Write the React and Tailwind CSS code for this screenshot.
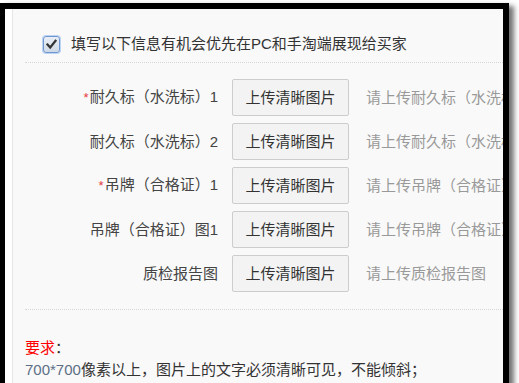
const rows = [
  { label: '耐久标（水洗标）1', hint: '请上传耐久标（水洗标）图片', required: true },
  { label: '耐久标（水洗标）2', hint: '请上传耐久标（水洗标）图片', required: false },
  { label: '吊牌（合格证）1', hint: '请上传吊牌（合格证）图片', required: true },
  { label: '吊牌（合格证）图1', hint: '请上传吊牌（合格证）图片', required: false },
  { label: '质检报告图', hint: '请上传质检报告图', required: false },
];

function CheckBox() {
  return (
    <span className="flex items-center justify-center w-[17px] h-[17px] rounded-[3px] border border-[#6f97d4] bg-gradient-to-b from-[#e9eef6] to-[#cfd9e6] shadow-[0_0_0_1px_#bcd3f2]">
      <svg width="11" height="11" viewBox="0 0 11 11">
        <path d="M1.5 5.5 L4.2 8.5 L9.5 1.8" fill="none" stroke="#333" strokeWidth="2.2" strokeLinecap="square" />
      </svg>
    </span>
  );
}

function UploadRow({ label, hint, required }) {
  return (
    <div className="flex items-center h-[37px]">
      <div className="w-[205px] shrink-0 text-right text-[#444] whitespace-nowrap">
        {required && <span className="text-[#e4393c] text-[13px] mr-[1px]">*</span>}
        {label}
      </div>
      <button className="ml-[14px] w-[117px] h-[37px] shrink-0 border border-[#cdcdcd] rounded-[2px] bg-[#f3f3f3] text-[#333] text-[15px]">
        上传清晰图片
      </button>
      <div className="ml-[17px] shrink-0 text-[#999] whitespace-nowrap">{hint}</div>
    </div>
  );
}

export default function App() {
  return (
    <div
      className="w-[519px] h-[383px] bg-white overflow-hidden pt-[3px] text-[15px] leading-[22px]"
      style={{ fontFamily: '"Liberation Sans", "Noto Sans CJK SC", sans-serif' }}
    >
      <div className="w-[509px] h-[400px] border-black border-l-[5px] border-t-[6px] border-r-[6px] shadow-[5px_3px_5px_rgba(0,0,0,0.55)] bg-white pl-[7px]">
        <div className="h-full border-l border-[#e6e6e6] bg-[#f9f9f9] overflow-hidden pt-[26px]">
          {/* opt-in */}
          <div className="flex items-center h-[18px] pl-[30px]">
            <CheckBox />
            <span className="ml-[11px] text-[#333] whitespace-nowrap">填写以下信息有机会优先在PC和手淘端展现给买家</span>
          </div>
          <div className="ml-[12px] mt-[9px] border-t border-dotted border-[#d6d6d6]" />

          {/* uploads */}
          <div className="mt-[16px] flex flex-col gap-[7px]">
            {rows.map((r) => (
              <UploadRow key={r.label} {...r} />
            ))}
          </div>
          <div className="ml-[12px] mt-[17px] border-t border-dotted border-[#d6d6d6]" />

          {/* requirements */}
          <div className="pl-[12px] mt-[27px] text-[#333]">
            <div><span className="text-[#ff0000]">要求</span>：</div>
            <div className="whitespace-nowrap"><span className="text-[#5d6f86]">700*700</span>像素以上，图片上的文字必须清晰可见，不能倾斜；</div>
          </div>
        </div>
      </div>
    </div>
  );
}
